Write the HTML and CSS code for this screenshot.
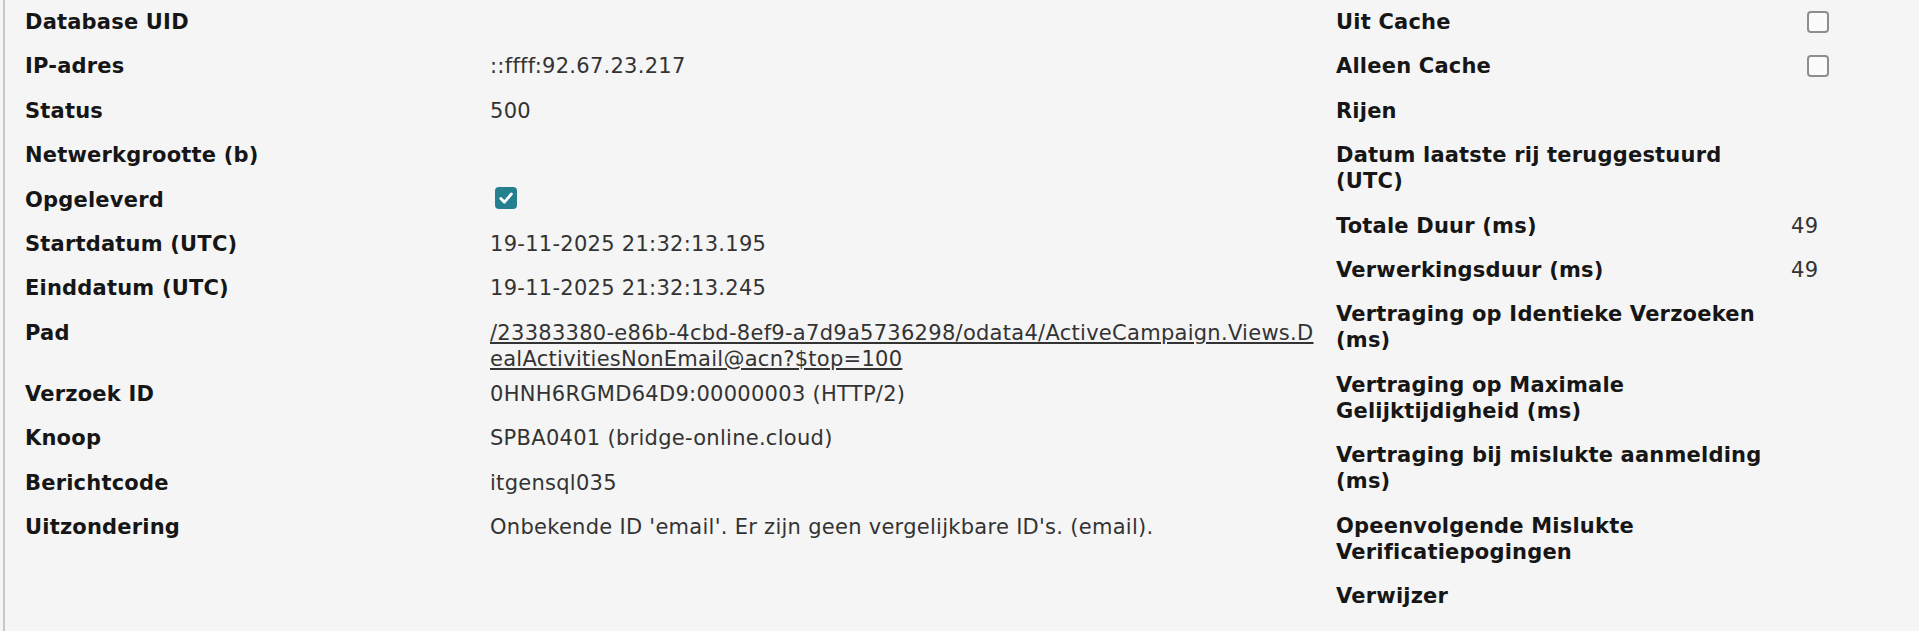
FILE: index.html
```html
<!DOCTYPE html>
<html lang="nl">
<head>
<meta charset="utf-8">
<title>Verzoekdetails</title>
<link rel="stylesheet" href="styles.css">
</head>
<body>
<div class="panel">
  <section class="col col-left">
    <div class="row"><div class="label">Database UID</div><div class="value"></div></div>
    <div class="row"><div class="label">IP-adres</div><div class="value">::ffff:92.67.23.217</div></div>
    <div class="row"><div class="label">Status</div><div class="value">500</div></div>
    <div class="row"><div class="label">Netwerkgrootte (b)</div><div class="value"></div></div>
    <div class="row"><div class="label">Opgeleverd</div><div class="value"><span class="cb cb-on"><svg viewBox="0 0 22 22" width="22" height="22"><path d="M5.8 11.6 L9.4 15.2 L16.4 7" fill="none" stroke="#fff" stroke-width="2.8" stroke-linecap="round" stroke-linejoin="round"/></svg></span></div></div>
    <div class="row"><div class="label">Startdatum (UTC)</div><div class="value">19-11-2025 21:32:13.195</div></div>
    <div class="row"><div class="label">Einddatum (UTC)</div><div class="value">19-11-2025 21:32:13.245</div></div>
    <div class="row"><div class="label">Pad</div><div class="value"><a class="link" href="#">/23383380-e86b-4cbd-8ef9-a7d9a5736298/odata4/ActiveCampaign.Views.DealActivitiesNonEmail@acn?$top=100</a></div></div>
    <div class="row"><div class="label">Verzoek ID</div><div class="value">0HNH6RGMD64D9:00000003 (HTTP/2)</div></div>
    <div class="row"><div class="label">Knoop</div><div class="value">SPBA0401 (bridge-online.cloud)</div></div>
    <div class="row"><div class="label">Berichtcode</div><div class="value">itgensql035</div></div>
    <div class="row"><div class="label">Uitzondering</div><div class="value">Onbekende ID 'email'. Er zijn geen vergelijkbare ID's. (email).</div></div>
  </section>
  <section class="col col-right">
    <div class="row"><div class="label">Uit Cache</div><div class="value"><span class="cb"></span></div></div>
    <div class="row"><div class="label">Alleen Cache</div><div class="value"><span class="cb"></span></div></div>
    <div class="row"><div class="label">Rijen</div><div class="value"></div></div>
    <div class="row"><div class="label">Datum laatste rij teruggestuurd (UTC)</div><div class="value"></div></div>
    <div class="row"><div class="label">Totale Duur (ms)</div><div class="value">49</div></div>
    <div class="row"><div class="label">Verwerkingsduur (ms)</div><div class="value">49</div></div>
    <div class="row"><div class="label">Vertraging op Identieke Verzoeken (ms)</div><div class="value"></div></div>
    <div class="row"><div class="label">Vertraging op Maximale Gelijktijdigheid (ms)</div><div class="value"></div></div>
    <div class="row"><div class="label">Vertraging bij mislukte aanmelding (ms)</div><div class="value"></div></div>
    <div class="row"><div class="label">Opeenvolgende Mislukte Verificatiepogingen</div><div class="value"></div></div>
    <div class="row"><div class="label">Verwijzer</div><div class="value"></div></div>
  </section>
</div>
</body>
</html>
```
FILE: styles.css
```css
html, body {
  margin: 0;
  padding: 0;
  background: #f5f5f5;
}
body {
  font-family: "DejaVu Sans", Verdana, sans-serif;
  font-size: 21px;
  line-height: 26px;
  color: #333;
}
.panel {
  margin-left: 3px;
  border-left: 2px solid #c8c8c8;
  min-height: 100vh;
  box-sizing: border-box;
  padding-left: 20px;
  display: grid;
  grid-template-columns: 1295px 1fr;
  column-gap: 16px;
}
.col {
  display: flex;
  flex-direction: column;
}
.row {
  display: grid;
  grid-template-columns: 465px 1fr;
}
.col-left .row {
  box-sizing: border-box;
  padding-top: 9px;
  min-height: 44.4px;
}
.col-right .row {
  padding: 9px 0 9.4px;
  grid-template-columns: 455px 1fr;
}
.label {
  font-weight: bold;
  color: #161616;
  letter-spacing: 0.2px;
}
.col-right .label {
  padding-right: 17px;
}
.value {
  min-width: 0;
  letter-spacing: 0.28px;
}
.link {
  color: #333;
  text-decoration: underline;
  word-break: break-all;
}
.cb {
  display: inline-block;
  box-sizing: border-box;
  width: 22px;
  height: 22px;
  margin-left: 5px;
  vertical-align: -4px;
  border: 2px solid #8e8e8e;
  border-radius: 4px;
  background: #fbfbfb;
}
.col-right .cb {
  margin-left: 16px;
}
.cb-on {
  border: none;
  background: #24808f;
  vertical-align: -2px;
}
.cb svg {
  display: block;
}
```
